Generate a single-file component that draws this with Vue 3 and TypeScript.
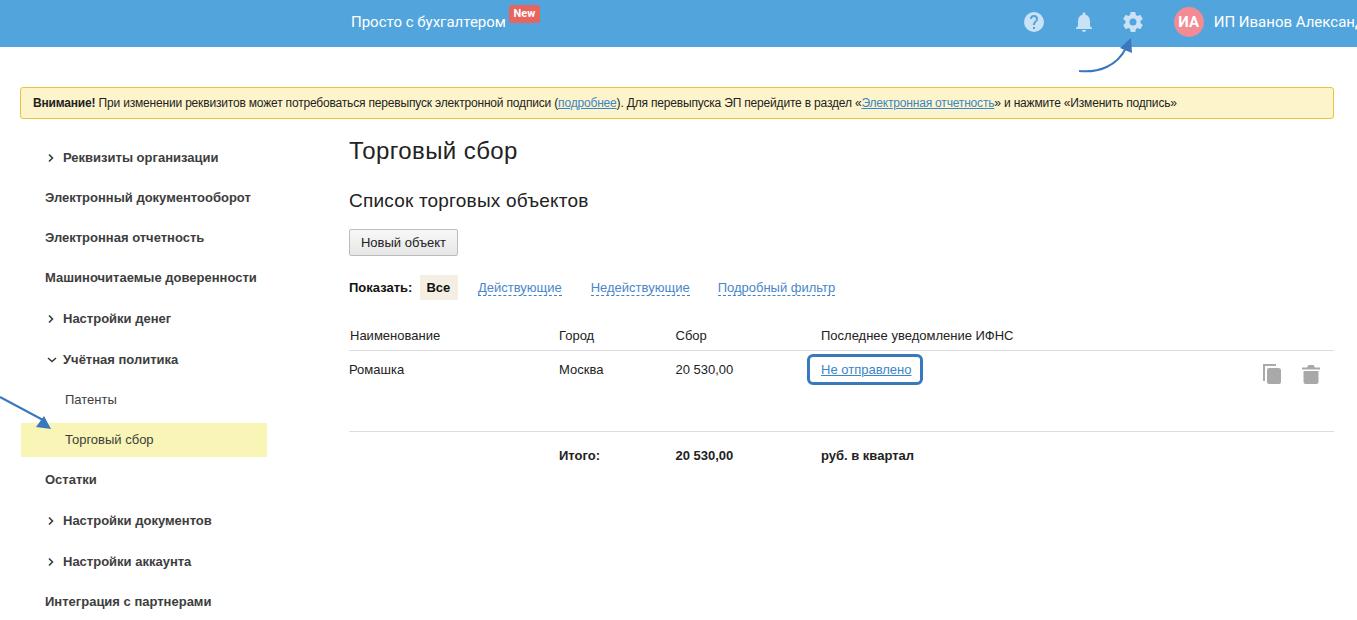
<script setup lang="ts">
interface NavItem { label: string; chevron?: 'right' | 'down'; sub?: boolean; active?: boolean }
const nav: NavItem[] = [
  { label: 'Реквизиты организации', chevron: 'right' },
  { label: 'Электронный документооборот' },
  { label: 'Электронная отчетность' },
  { label: 'Машиночитаемые доверенности' },
  { label: 'Настройки денег', chevron: 'right' },
  { label: 'Учётная политика', chevron: 'down' },
  { label: 'Патенты', sub: true },
  { label: 'Торговый сбор', sub: true, active: true },
  { label: 'Остатки' },
  { label: 'Настройки документов', chevron: 'right' },
  { label: 'Настройки аккаунта', chevron: 'right' },
  { label: 'Интеграция с партнерами' }
]
const filters = ['Действующие', 'Недействующие', 'Подробный фильтр']
</script>

<template>
  <div class="page">
    <header class="topbar">
      <div class="brand">
        <span class="brand-name">Просто с бухгалтером</span>
        <span class="badge">New</span>
      </div>
      <div class="top-actions">
        <svg class="ic" width="24" height="24" viewBox="0 0 24 24"><path fill="#c9e2f6" d="M12 2a10 10 0 1 0 0 20 10 10 0 0 0 0-20zm1 17h-2v-2h2v2zm2.07-7.75-.9.92C13.45 12.9 13 13.5 13 15h-2v-.5c0-1.1.45-2.1 1.17-2.83l1.24-1.26A2 2 0 1 0 10 9H8a4 4 0 1 1 8 0c0 .88-.36 1.68-.93 2.25z"/></svg>
        <svg class="ic" width="24" height="24" viewBox="0 0 24 24"><path fill="#c9e2f6" d="M12 22c1.1 0 2-.9 2-2h-4c0 1.100.9 2 2 2zm6-6v-5c0-3.070-1.630-5.640-4.500-6.320V4c0-.83-.67-1.500-1.500-1.500s-1.500.67-1.500 1.500v.68C7.640 5.360 6 7.920 6 11v5l-2 2v1h16v-1l-2-2z"/></svg>
        <svg class="ic" width="24" height="24" viewBox="0 0 24 24"><path fill="#c9e2f6" d="M19.430 12.980c.04-.32.07-.64.07-.98s-.03-.66-.07-.98l2.110-1.650c.19-.15.24-.42.12-.64l-2-3.460c-.12-.22-.39-.3-.61-.22l-2.490 1c-.52-.4-1.080-.73-1.690-.98l-.38-2.650A.49.49 0 0 0 14 2h-4c-.25 0-.46.18-.49.42l-.38 2.650c-.61.25-1.170.59-1.690.98l-2.490-1c-.23-.09-.49 0-.61.22l-2 3.460c-.13.22-.07.49.12.64l2.110 1.650c-.04.32-.07.65-.07.98s.03.66.07.98l-2.110 1.650c-.19.15-.24.42-.12.64l2 3.460c.12.22.39.3.61.22l2.490-1c.52.4 1.080.73 1.690.98l.38 2.650c.03.24.24.42.49.42h4c.25 0 .46-.18.49-.42l.38-2.650c.61-.25 1.170-.59 1.690-.98l2.490 1c.23.09.49 0 .61-.22l2-3.460c.12-.22.07-.49-.12-.64l-2.110-1.650zM12 15.500a3.500 3.500 0 1 1 0-7 3.500 3.500 0 0 1 0 7z"/></svg>
        <div class="user">
          <span class="avatar">ИА</span>
          <span class="user-name">ИП Иванов Александр</span>
        </div>
      </div>
    </header>

    <div class="notice">
      <b>Внимание!</b> При изменении реквизитов может потребоваться перевыпуск электронной подписи (<a href="#">подробнее</a>). Для перевыпуска ЭП перейдите в раздел «<a href="#">Электронная отчетность</a>» и нажмите «Изменить подпись»
    </div>

    <div class="body">
      <nav class="side">
        <div
          v-for="item in nav"
          :key="item.label"
          class="nav-row"
          :class="{ sub: item.sub, active: item.active, chev: item.chevron }"
        >
          <svg v-if="item.chevron === 'right'" class="chevron" width="8" height="10" viewBox="0 0 8 10"><path d="M2 1.500 5.500 5 2 8.500" fill="none" stroke="#3b3b3b" stroke-width="1.600"/></svg>
          <svg v-if="item.chevron === 'down'" class="chevron" width="10" height="8" viewBox="0 0 10 8"><path d="M1 2 5 5.500 9 2" fill="none" stroke="#3b3b3b" stroke-width="1.600"/></svg>
          <span>{{ item.label }}</span>
        </div>
      </nav>

      <main class="main">
        <h1>Торговый сбор</h1>
        <h2>Список торговых объектов</h2>
        <button class="btn" type="button">Новый объект</button>

        <div class="filters">
          <b class="show">Показать:</b>
          <b class="chip">Все</b>
          <a v-for="f in filters" :key="f" class="dash" href="#">{{ f }}</a>
        </div>

        <div class="grid head">
          <span>Наименование</span><span>Город</span><span>Сбор</span><span>Последнее уведомление ИФНС</span><span></span>
        </div>
        <div class="grid row">
          <span>Ромашка</span><span>Москва</span><span>20 530,00</span>
          <span class="status-cell"><a class="status" href="#">Не отправлено</a></span>
          <span class="tools">
            <svg width="24" height="24" viewBox="0 0 24 24"><path fill="#a9a9a9" d="M3 2h13v2H5v15H3zM9 6h10a3 3 0 0 1 2 2v12a2 2 0 0 1-2 2H9a2 2 0 0 1-2-2V8a2 2 0 0 1 2-2z"/></svg>
            <svg width="24" height="24" viewBox="0 0 24 24"><path fill="#a9a9a9" d="M3 5.500h18V7.500H3zM8 5.500 9.500 3h5L16 5.500zM4.500 9h15v11a2 2 0 0 1-2 2h-11a2 2 0 0 1-2-2z"/></svg>
          </span>
        </div>
        <div class="grid total">
          <span class="total-gap"></span>
          <b>Итого:</b><b>20 530,00</b><b>руб. в квартал</b><span></span>
        </div>
      </main>
    </div>

    <svg class="arrow arrow-top" width="70" height="40" viewBox="0 0 70 40"><path d="M0 35C20 37 38 30 47 12" fill="none" stroke="#3a78bd" stroke-width="2"/><path d="M52 2 53 17 41 12z" fill="#3a78bd"/></svg>
    <svg class="arrow arrow-side" width="60" height="50" viewBox="0 0 60 50"><path d="M0 7 43 30" fill="none" stroke="#3a78bd" stroke-width="2"/><path d="M51 39 36 37 44 26z" fill="#3a78bd"/></svg>
  </div>
</template>

<style>
html, body { margin: 0; background: #fff; }
</style>

<style scoped>
.page {
  position: relative;
  width: 1357px;
  height: 620px;
  overflow: hidden;
  font-family: "Liberation Sans", Arial, sans-serif;
  font-size: 13px;
  color: #333;
}
.topbar {
  height: 47px;
  background: #52a5dc;
  display: flex;
  align-items: flex-start;
  padding-left: 351px;
  color: #fff;
  box-sizing: border-box;
  white-space: nowrap;
}
.brand { display: flex; align-items: flex-start; font-family: Roboto, sans-serif; padding-top: 5px; }
.brand-name { font-size: 15px; line-height: 18px; margin-top: 8px; }
.badge {
  background: #e8645f;
  border-radius: 3px;
  font-size: 11px;
  font-weight: 700;
  line-height: 17px;
  height: 18px;
  padding: 0 4.500px;
  margin-left: 3px;
}
.top-actions { display: flex; align-items: center; margin-left: 482.500px; flex: none; height: 44px; }
.ic { margin-right: 25.500px; flex: none; }
.user { display: flex; align-items: center; margin-left: 3px; }
.avatar {
  width: 30px; height: 30px; border-radius: 50%;
  background: #f28b94;
  display: flex; align-items: center; justify-content: center;
  font: 700 15px Roboto, sans-serif;
}
.user-name { font: 15px Roboto, sans-serif; margin-left: 10px; }
.notice {
  margin: 40px 23px 0 20px;
  height: 32px;
  box-sizing: border-box;
  border: 1px solid #e8c33f;
  border-radius: 3px;
  background: #fdf4cb;
  padding-left: 12px;
  line-height: 30px;
  font-size: 12px;
  letter-spacing: -0.180px;
  color: #222;
  white-space: nowrap;
}
.notice a { color: #3a86c8; text-decoration: underline; }
.body { display: flex; margin-top: 18px; }
.side { width: 246px; margin-left: 21px; flex: none; }
.nav-row {
  height: 40px;
  display: flex;
  align-items: center;
  padding-left: 24px;
  padding-bottom: 2px;
  font-size: 13px;
  font-weight: 700;
  color: #3d3d3d;
  position: relative;
  box-sizing: border-box;
}
.nav-row.chev { padding-left: 42px; padding-bottom: 0; height: 41px; }
.chevron { position: absolute; left: 26px; top: 50%; transform: translateY(-50%); }
.nav-row.sub { padding-left: 44px; font-weight: 400; }
.nav-row.active { background: #f8f5b7; height: 34px; margin: 3px 0; }
.main { margin-left: 82px; width: 985px; flex: none; color: #222; }
h1 { font-size: 24px; letter-spacing: 0.400px; font-weight: 400; line-height: 28px; margin: 0; color: #222; }
h2 { font-size: 19px; letter-spacing: 0.200px; font-weight: 400; line-height: 22px; margin: 25px 0 0; color: #222; }
.btn {
  display: block;
  margin-top: 17px;
  width: 109px; height: 27px;
  border: 1px solid #bdbdbd;
  border-radius: 2px;
  background: linear-gradient(#f8f8f8, #e6e6e6);
  font: 13px "Liberation Sans", Arial, sans-serif;
  color: #222;
  padding: 0;
}
.filters { display: flex; align-items: center; margin-top: 19px; height: 25px; font-size: 13px; }
.show { color: #111; }
.chip { background: #f5efe3; color: #111; height: 25px; line-height: 25px; padding: 0 6px; margin-left: 8px; width: 38px; box-sizing: border-box; }
.dash { color: #4a86c8; text-decoration: none; border-bottom: 1px dashed #3a86c8; line-height: 15px; margin-left: 29px; }
.chip + .dash { margin-left: 19.500px; }
.dash:last-child { margin-left: 28px; }
.grid {
  display: grid;
  grid-template-columns: 210px 116.500px 145.500px 1fr 80px;
  font-size: 13px;
  align-items: center;
}
.head { margin-top: 12px; height: 39px; border-bottom: 1px solid #ddd; padding-top: 8px; box-sizing: border-box; }
.head span:first-child { padding-left: 1px; }
.row { height: 81px; align-items: start; border-bottom: 1px solid #ddd; box-sizing: border-box; padding-top: 11px; line-height: 15px; }
.status-cell { position: relative; }
.status { color: #3a86c8; text-decoration: underline; outline: 3px solid #3a78bd; border-radius: 3px; padding: 5px 9px 5px 11px; margin-left: -11px; }
.tools { display: flex; justify-content: flex-end; gap: 15px; padding-right: 11px; }
.total { height: 47px; }
.total b { font-weight: 700; }
.arrow { position: absolute; }
.arrow-top { left: 1079px; top: 36px; }
.arrow-side { left: 0; top: 390px; }
</style>
